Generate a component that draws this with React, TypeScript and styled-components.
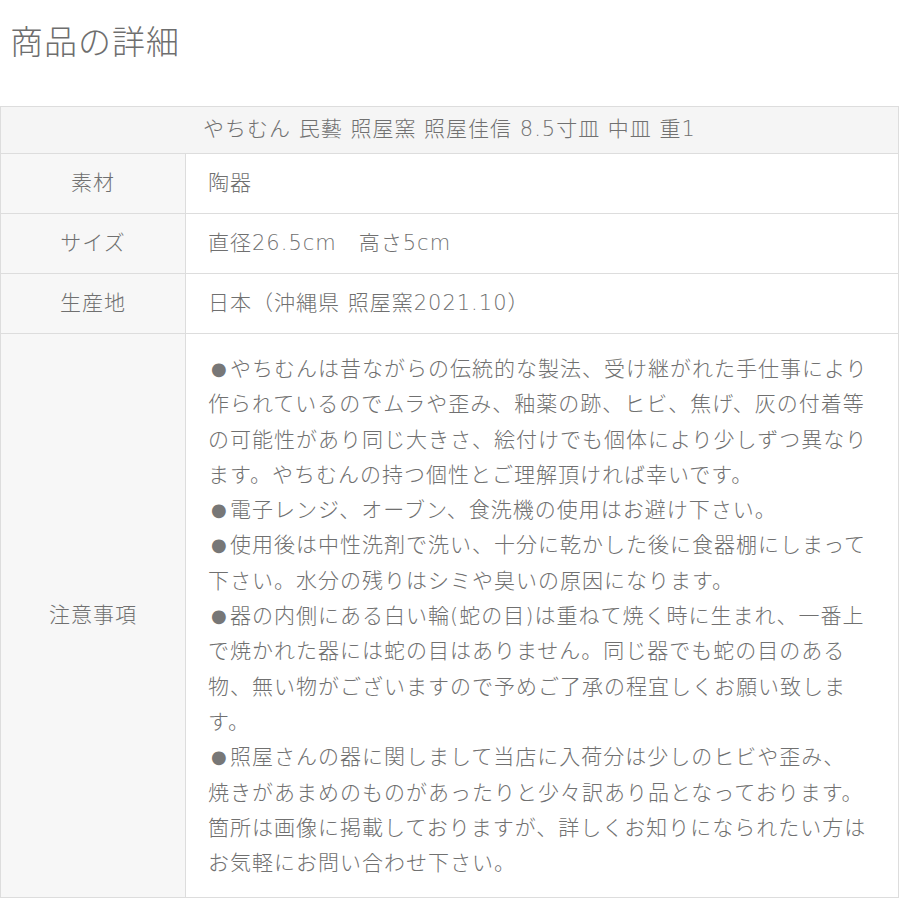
import React from "react";
import styled, { createGlobalStyle } from "styled-components";

const GlobalStyle = createGlobalStyle`
  body {
    margin: 0;
    background: #ffffff;
    font-family: "DejaVu Sans", "Noto Sans CJK JP", sans-serif;
    color: #666666;
  }
`;

const notes: string[] = [
  "●やちむんは昔ながらの伝統的な製法、受け継がれた手仕事により",
  "作られているのでムラや歪み、釉薬の跡、ヒビ、焦げ、灰の付着等",
  "の可能性があり同じ大きさ、絵付けでも個体により少しずつ異なり",
  "ます。やちむんの持つ個性とご理解頂ければ幸いです。",
  "●電子レンジ、オーブン、食洗機の使用はお避け下さい。",
  "●使用後は中性洗剤で洗い、十分に乾かした後に食器棚にしまって",
  "下さい。水分の残りはシミや臭いの原因になります。",
  "●器の内側にある白い輪(蛇の目)は重ねて焼く時に生まれ、一番上",
  "で焼かれた器には蛇の目はありません。同じ器でも蛇の目のある",
  "物、無い物がございますので予めご了承の程宜しくお願い致しま",
  "す。",
  "●照屋さんの器に関しまして当店に入荷分は少しのヒビや歪み、",
  "焼きがあまめのものがあったりと少々訳あり品となっております。",
  "箇所は画像に掲載しておりますが、詳しくお知りになられたい方は",
  "お気軽にお問い合わせ下さい。",
];

const specs = [
  { label: "素材", value: "陶器" },
  { label: "サイズ", value: "直径26.5cm　高さ5cm" },
  { label: "生産地", value: "日本（沖縄県 照屋窯2021.10）" },
];

export default function App() {
  return (
    <>
      <GlobalStyle />
      <Page>
        <Title>商品の詳細</Title>
        <Table>
          <colgroup>
            <LabelCol />
            <col />
          </colgroup>
          <tbody>
            <tr>
              <HeaderCell colSpan={2}>
                やちむん 民藝 照屋窯 照屋佳信 8.5寸皿 中皿 重1
              </HeaderCell>
            </tr>
            {specs.map((s) => (
              <tr key={s.label}>
                <LabelCell>{s.label}</LabelCell>
                <ValueCell>{s.value}</ValueCell>
              </tr>
            ))}
            <tr>
              <LabelCell>注意事項</LabelCell>
              <ValueCell $tall>
                {notes.map((line, i) =>
                  line.startsWith("●") ? (
                    <NoteLine key={i}>
                      <Bullet>●</Bullet>
                      {line.slice(1)}
                    </NoteLine>
                  ) : (
                    <NoteLine key={i}>{line}</NoteLine>
                  )
                )}
              </ValueCell>
            </tr>
          </tbody>
        </Table>
      </Page>
    </>
  );
}

const Page = styled.div`
  width: 900px;
`;

const Title = styled.h2`
  margin: 0 0 43px;
  padding: 23px 10px 0;
  font-size: 33px;
  line-height: 40px;
  font-weight: 300;
  letter-spacing: 1px;
  color: #6e6e6e;
`;

const Table = styled.table`
  width: 899px;
  border-collapse: collapse;
  table-layout: fixed;
  border: 1px solid #dddddd;
  font-size: 21px;
  font-weight: 300;
  letter-spacing: 1px;
  color: #707070;
`;

const LabelCol = styled.col`
  width: 185px;
`;

const HeaderCell = styled.th`
  background: #f5f5f5;
  border: 1px solid #dddddd;
  padding: 5px 10px 6px;
  line-height: 35px;
  font-weight: 300;
  text-align: center;
`;

const LabelCell = styled.th`
  background: #f7f7f7;
  border: 1px solid #dddddd;
  padding: 12px 0;
  line-height: 35px;
  font-weight: 300;
  text-align: center;
  vertical-align: middle;
`;

const ValueCell = styled.td<{ $tall?: boolean }>`
  background: #ffffff;
  border: 1px solid #dddddd;
  padding: ${(p) => (p.$tall ? "18px 10px 16px 22px" : "12px 10px 12px 22px")};
  line-height: 35px;
  text-align: left;
  vertical-align: middle;
`;

const NoteLine = styled.div`
  height: 35.3px;
  line-height: 35.3px;
  white-space: nowrap;
`;

const Bullet = styled.span`
  display: inline-block;
  box-sizing: border-box;
  width: 22px;
  padding-left: 3px;
  font-family: "DejaVu Sans", sans-serif;
  font-size: 18px;
  font-weight: 400;
  line-height: 1;
  letter-spacing: 0;
  vertical-align: 1px;
  color: #777777;
`;
